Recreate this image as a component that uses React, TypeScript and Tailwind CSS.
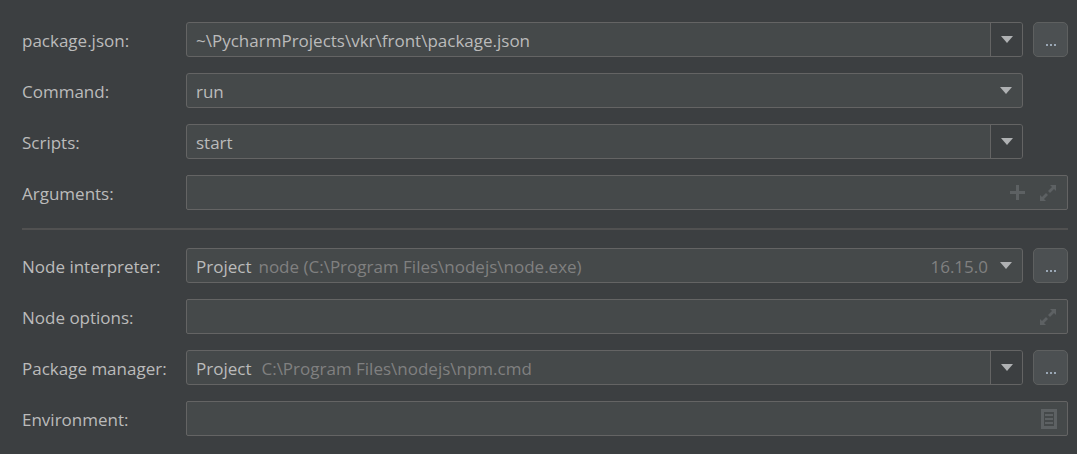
import React from "react";

const font = { fontFamily: '"Open Sans", "Noto Sans", sans-serif' };

function Arrow() {
  return (
    <svg width="12" height="7" viewBox="0 0 12 7">
      <path d="M0 0 L12 0 L6 7 Z" fill="#afb1b3" />
    </svg>
  );
}

function Dots() {
  return (
    <div className="w-[35px] h-[35px] shrink-0 rounded-[5px] border border-[#5e6060] bg-[#4c5052] flex items-center justify-center gap-[2px] pt-[11px]">
      <span className="w-[2px] h-[2px] bg-[#9aa7b5]" />
      <span className="w-[2px] h-[2px] bg-[#9aa7b5]" />
      <span className="w-[2px] h-[2px] bg-[#9aa7b5]" />
    </div>
  );
}

function Combo({
  children,
  editable,
  right,
}: {
  children: React.ReactNode;
  editable?: boolean;
  right?: React.ReactNode;
}) {
  return (
    <div className="flex-1 h-[35px] rounded-[3px] border border-[#646464] bg-[#45494a] flex items-stretch overflow-hidden">
      <div className="flex-1 flex items-center pl-[9px] pt-[2px] text-[17px] text-[#bbbbbb] whitespace-nowrap">
        {children}
      </div>
      {right}
      <div
        className={
          "w-[32px] flex items-center justify-center " +
          (editable ? "border-l border-[#646464] bg-[#3c3f41]" : "")
        }
      >
        <Arrow />
      </div>
    </div>
  );
}

function Field({ icons }: { icons: React.ReactNode }) {
  return (
    <div className="flex-1 h-[35px] rounded-[2px] border border-[#646464] bg-[#45494a] flex items-center justify-end pr-[10px] gap-[14px]">
      {icons}
    </div>
  );
}

function Plus() {
  return (
    <svg width="15" height="15" viewBox="0 0 15 15">
      <rect x="6" y="0" width="3" height="15" fill="#5d6163" />
      <rect x="0" y="6" width="15" height="3" fill="#5d6163" />
    </svg>
  );
}

function Expand() {
  return (
    <svg width="18" height="18" viewBox="0 0 18 18">
      <path d="M11 1 L17 1 L17 7 L15 5 L11 9 L9 7 L13 3 Z" fill="#5d6163" />
      <path d="M1 11 L1 17 L7 17 L5 15 L9 11 L7 9 L3 13 Z" fill="#5d6163" />
    </svg>
  );
}

function Doc() {
  return (
    <svg width="16" height="20" viewBox="0 0 16 20">
      <rect x="0" y="0" width="16" height="20" fill="#5d6163" />
      <rect x="3" y="3" width="10" height="14" fill="#45494a" />
      <rect x="4" y="5" width="8" height="2" fill="#5d6163" />
      <rect x="4" y="9" width="8" height="2" fill="#5d6163" />
      <rect x="4" y="13" width="8" height="2" fill="#5d6163" />
    </svg>
  );
}

function Row({ label, children }: { label: string; children: React.ReactNode }) {
  return (
    <div className="flex items-center h-[35px]">
      <div className="w-[164px] shrink-0 pt-[2px] text-[17px] text-[#bbbbbb] whitespace-nowrap">{label}</div>
      <div className="flex-1 flex items-center gap-[10px]">{children}</div>
    </div>
  );
}

function Spacer() {
  return <div className="w-[35px] h-[35px] shrink-0" />;
}

export default function App() {
  return (
    <div
      className="w-[1077px] h-[454px] bg-[#3c3f41] pl-[22px] pr-[9px] pt-[22px] flex flex-col gap-[16px]"
      style={font}
    >
      <Row label="package.json:">
        <Combo editable>~\PycharmProjects\vkr\front\package.json</Combo>
        <Dots />
      </Row>
      <Row label="Command:">
        <Combo>run</Combo>
        <Spacer />
      </Row>
      <Row label="Scripts:">
        <Combo editable>start</Combo>
        <Spacer />
      </Row>
      <Row label="Arguments:">
        <Field
          icons={
            <>
              <Plus />
              <Expand />
            </>
          }
        />
      </Row>
      <div className="h-[2px] bg-[#515151] my-[2px]" />
      <Row label="Node interpreter:">
        <Combo
          right={
            <div className="flex items-center pt-[2px] text-[17px] text-[#808080] pr-[2px]">16.15.0</div>
          }
        >
          <span>Project</span>
          <span className="ml-[7px] text-[#808080]">node (C:\Program Files\nodejs\node.exe)</span>
        </Combo>
        <Dots />
      </Row>
      <Row label="Node options:">
        <Field icons={<Expand />} />
      </Row>
      <Row label="Package manager:">
        <Combo editable>
          <span>Project</span>
          <span className="ml-[10px] text-[#808080]">C:\Program Files\nodejs\npm.cmd</span>
        </Combo>
        <Dots />
      </Row>
      <Row label="Environment:">
        <Field icons={<Doc />} />
      </Row>
    </div>
  );
}
